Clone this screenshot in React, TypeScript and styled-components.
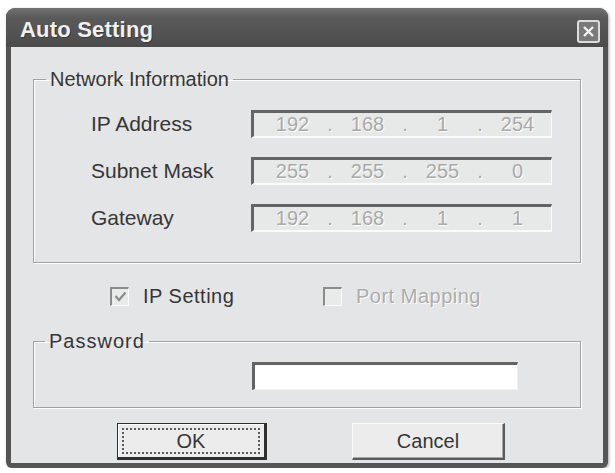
import { Fragment } from "react";
import styled, { createGlobalStyle } from "styled-components";

const GlobalStyle = createGlobalStyle`
  html, body {
    margin: 0;
    background: #ffffff;
  }
  * {
    box-sizing: border-box;
  }
`;

const Page = styled.div`
  padding: 8px 0 0 6px;
  font-family: "Liberation Sans", Arial, sans-serif;
`;

const Window = styled.div`
  width: 602px;
  height: 460px;
  display: flex;
  flex-direction: column;
  background: #555555;
  border-radius: 9px 9px 6px 6px;
  box-shadow: 1px 1px 3px rgba(0, 0, 0, 0.35);
`;

const TitleBar = styled.div`
  height: 39px;
  flex: none;
  display: flex;
  align-items: center;
  justify-content: space-between;
  padding: 4px 8px 0 14px;
  border-radius: 9px 9px 0 0;
  background: linear-gradient(#727272 0%, #5a5a5a 25%, #525252 70%, #4b4b4b 100%);
`;

const Title = styled.span`
  color: #f0f0f0;
  font-size: 22px;
  font-weight: bold;
  letter-spacing: 0.2px;
  text-shadow: 1px 1px 0 #3a3a3a;
`;

const CloseButton = styled.div`
  width: 23px;
  height: 23px;
  margin-top: 4px;
  border: 2px solid #dcdcdc;
  border-radius: 3px;
  background: #7a7a7a;
  display: flex;
  align-items: center;
  justify-content: center;
`;

const Client = styled.div`
  flex: 1;
  margin: 0 5px 5px;
  padding: 21px 22px 0;
  background: #e4e5e6;
  color: #363636;
  display: flex;
  flex-direction: column;
`;

const Group = styled.fieldset`
  margin: 0;
  padding: 0;
  min-width: 0;
  border: 1px solid #a2a2a2;
  box-shadow: 1px 1px 0 #ffffff, inset 1px 1px 0 #ffffff;
`;

const Legend = styled.legend<{ $indent: number; $spacing?: number }>`
  margin-left: ${(p) => p.$indent}px;
  padding: 0 4px;
  font-size: 20px;
  line-height: 22px;
  letter-spacing: ${(p) => p.$spacing ?? 0}px;
  color: #363636;
`;

const InfoGrid = styled.div`
  display: grid;
  grid-template-columns: 160px 301px;
  grid-auto-rows: 28px;
  row-gap: 19px;
  padding: 20px 0 30px 57px;
`;

const Label = styled.div`
  font-size: 21px;
  line-height: 28px;
  color: #363636;
`;

const IpBox = styled.div`
  display: flex;
  align-items: center;
  padding-left: 5px;
  background: #e7e8e8;
  border-top: 3px solid #646464;
  border-left: 3px solid #646464;
  border-right: 1px solid #fbfbfb;
  border-bottom: 2px solid #fbfbfb;
`;

const Octet = styled.span`
  flex: 1;
  text-align: center;
  font-size: 20px;
  color: #a9a9a9;
  text-shadow: 1px 1px 0 #ffffff;
`;

const Dot = styled.span`
  width: 8px;
  text-align: center;
  font-size: 20px;
  color: #a9a9a9;
  text-shadow: 1px 1px 0 #ffffff;
`;

const CheckRow = styled.div`
  height: 26px;
  margin: 20px 0 21px;
  padding-left: 77px;
  display: flex;
  align-items: center;
`;

const CheckItem = styled.label<{ $width?: number }>`
  width: ${(p) => (p.$width ? `${p.$width}px` : "auto")};
  display: flex;
  align-items: center;
  gap: 14px;
`;

const Box = styled.span`
  width: 19px;
  height: 19px;
  display: flex;
  align-items: center;
  justify-content: center;
  background: #e9eaea;
  border-top: 2px solid #8c8c8c;
  border-left: 2px solid #8c8c8c;
  border-right: 1px solid #fafafa;
  border-bottom: 1px solid #fafafa;
`;

const CheckText = styled.span<{ $disabled?: boolean }>`
  font-size: 20px;
  letter-spacing: 0.5px;
  color: ${(p) => (p.$disabled ? "#acacac" : "#363636")};
  text-shadow: ${(p) => (p.$disabled ? "1px 1px 0 #ffffff" : "none")};
`;

const PasswordBody = styled.div`
  padding: 10px 0 17px 218px;
`;

const PasswordInput = styled.div`
  width: 266px;
  height: 28px;
  background: #ffffff;
  border-top: 3px solid #646464;
  border-left: 3px solid #646464;
  border-right: 1px solid #f0f0f0;
  border-bottom: 1px solid #f0f0f0;
`;

const ButtonRow = styled.div`
  display: flex;
  gap: 85px;
  margin-top: 15px;
  padding-left: 84px;
`;

const Button = styled.button<{ $primary?: boolean; $width: number }>`
  width: ${(p) => p.$width}px;
  height: 37px;
  padding: 0;
  position: relative;
  font-family: "Liberation Sans", Arial, sans-serif;
  font-size: 20px;
  color: #363636;
  background: #ececec;
  border-radius: 0;
  ${(p) =>
    p.$primary
      ? `
    border: 1px solid #2e2e2e;
    border-right-width: 3px;
    border-bottom-width: 3px;
    box-shadow: inset 1px 1px 0 #ffffff;
  `
      : `
    border-top: 1px solid #fbfbfb;
    border-left: 1px solid #fbfbfb;
    border-right: 2px solid #5a5a5a;
    border-bottom: 2px solid #5a5a5a;
    box-shadow: inset -1px -1px 0 #a6a6a6;
  `}
`;

const FocusRing = styled.span`
  position: absolute;
  inset: 4px 4px 3px 4px;
  border: 2px dotted #5a5a5a;
  display: flex;
  align-items: center;
  justify-content: center;
`;

const ipRows = [
  { label: "IP Address", value: ["192", "168", "1", "254"] },
  { label: "Subnet Mask", value: ["255", "255", "255", "0"] },
  { label: "Gateway", value: ["192", "168", "1", "1"] },
];

const CheckMark = () => (
  <svg width="13" height="12" viewBox="0 0 13 12">
    <polyline points="1.5,5 5,9 11.5,1.5" fill="none" stroke="#8a8a8a" strokeWidth="2.2" />
  </svg>
);

export default function App() {
  return (
    <Page>
      <GlobalStyle />
      <Window>
        <TitleBar>
          <Title>Auto Setting</Title>
          <CloseButton>
            <svg width="13" height="13" viewBox="0 0 13 13">
              <path d="M2 2 L11 11 M11 2 L2 11" stroke="#f2f2f2" strokeWidth="2.4" />
            </svg>
          </CloseButton>
        </TitleBar>
        <Client>
          <Group>
            <Legend $indent={12}>Network Information</Legend>
            <InfoGrid>
              {ipRows.map((row) => (
                <Fragment key={row.label}>
                  <Label>{row.label}</Label>
                  <IpBox>
                    {row.value.map((v, i) => (
                      <Fragment key={i}>
                        {i > 0 && <Dot>.</Dot>}
                        <Octet>{v}</Octet>
                      </Fragment>
                    ))}
                  </IpBox>
                </Fragment>
              ))}
            </InfoGrid>
          </Group>

          <CheckRow>
            <CheckItem $width={213}>
              <Box>
                <CheckMark />
              </Box>
              <CheckText>IP Setting</CheckText>
            </CheckItem>
            <CheckItem>
              <Box />
              <CheckText $disabled>Port Mapping</CheckText>
            </CheckItem>
          </CheckRow>

          <Group>
            <Legend $indent={11} $spacing={1}>Password</Legend>
            <PasswordBody>
              <PasswordInput />
            </PasswordBody>
          </Group>

          <ButtonRow>
            <Button $primary $width={150}>
              <FocusRing>OK</FocusRing>
            </Button>
            <Button $width={153}>Cancel</Button>
          </ButtonRow>
        </Client>
      </Window>
    </Page>
  );
}
